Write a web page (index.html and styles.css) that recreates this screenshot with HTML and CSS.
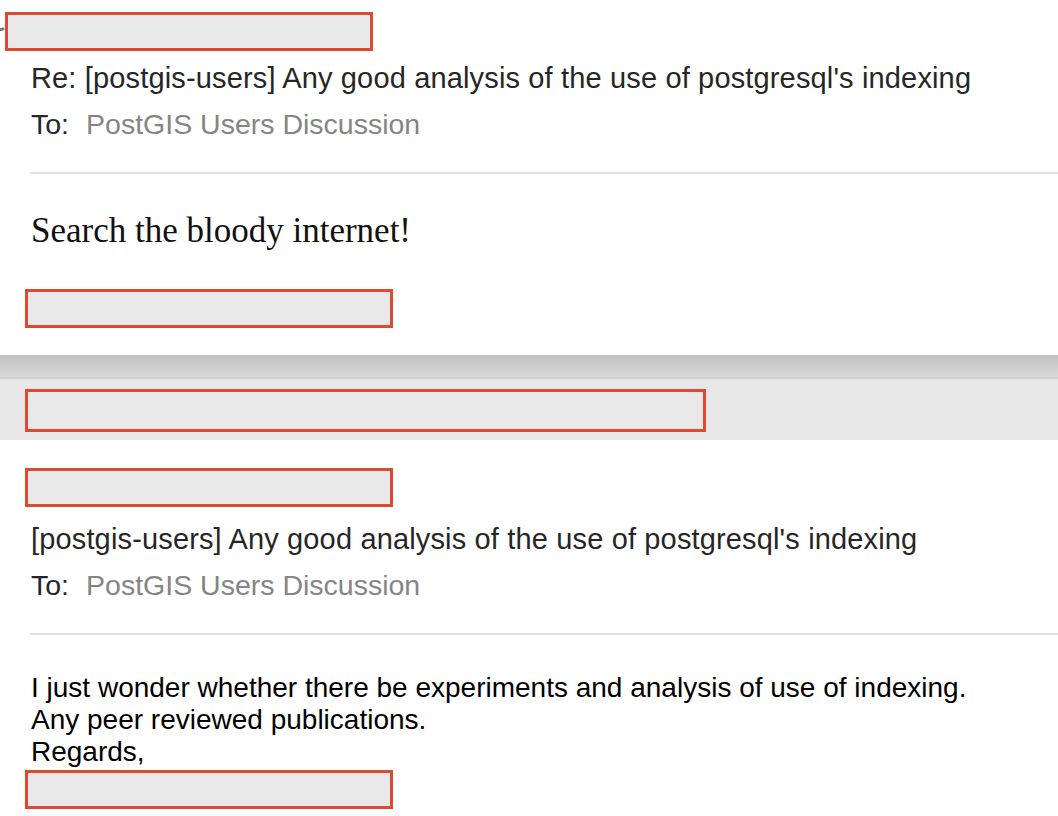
FILE: index.html
```html
<!DOCTYPE html>
<html>
<head>
<meta charset="utf-8">
<link rel="stylesheet" href="styles.css">
</head>
<body>
<section class="msg msg-top">
  <div class="from-row">
    <svg class="reply-icon" width="14" height="14" viewBox="0 0 14 14"><path d="M1 13 C2 7 6 4 12 3" fill="none" stroke="#7a7a7a" stroke-width="3" stroke-linecap="round"/></svg>
    <div class="redact r-name-top"></div>
  </div>
  <div class="subject">Re: [postgis-users] Any good analysis of the use of postgresql's indexing</div>
  <div class="to"><span class="to-label">To:</span><span class="to-name">PostGIS Users Discussion</span></div>
  <hr class="sep">
  <p class="reply-text">Search the bloody internet!</p>
  <div class="redact r-sig"></div>
</section>
<div class="shadow"></div>
<div class="band">
  <div class="redact r-wide"></div>
</div>
<section class="msg msg-bottom">
  <div class="redact r-name"></div>
  <div class="subject">[postgis-users] Any good analysis of the use of postgresql's indexing</div>
  <div class="to"><span class="to-label">To:</span><span class="to-name">PostGIS Users Discussion</span></div>
  <hr class="sep">
  <div class="body-text">
    <div>I just wonder whether there be experiments and analysis of use of indexing.</div>
    <div>Any peer reviewed publications.</div>
    <div>Regards,</div>
  </div>
  <div class="redact r-sig2"></div>
</section>
</body>
</html>
```
FILE: styles.css
```css
html, body {
  margin: 0;
  padding: 0;
  background: #ffffff;
  overflow: hidden;
}
body {
  font-family: "Liberation Sans", Arial, sans-serif;
  color: #222222;
  width: 1058px;
  height: 816px;
}
.redact {
  box-sizing: border-box;
  height: 39px;
  border: 3px solid #e0482f;
  background: #eae9e9;
}
.msg {
  background: #ffffff;
}
.msg-top {
  padding: 12px 0 27px;
}
.from-row {
  display: flex;
  align-items: flex-start;
}
.reply-icon {
  margin-left: -9px;
  margin-top: 14px;
  flex: none;
}
.r-name-top {
  width: 368px;
}
.subject {
  margin: 4px 0 0 31px;
  font-size: 29px;
  letter-spacing: 0.15px;
  line-height: 46px;
  color: #262626;
  white-space: nowrap;
}
.to {
  margin-left: 31px;
  font-size: 28.5px;
  line-height: 46px;
  white-space: nowrap;
}
.to-label {
  color: #262626;
  margin-right: 17px;
}
.to-name {
  color: #858585;
}
.sep {
  margin: 25px 0 0 30px;
  border: 0;
  height: 2px;
  background: #e3e3e3;
}
.reply-text {
  margin: 37px 0 0 31px;
  font-family: "Liberation Serif", "Times New Roman", serif;
  font-size: 35px;
  line-height: 40px;
  color: #111111;
}
.r-sig {
  width: 368px;
  margin: 38px 0 0 25px;
}
.shadow {
  height: 22px;
  background: linear-gradient(#c1c1c1, #d9d9d9);
  border-bottom: 2px solid #cfcfcf;
}
.band {
  background: #e8e8e8;
  padding: 10px 0 8px 25px;
}
.r-wide {
  width: 681px;
  height: 43px;
}
.msg-bottom {
  padding-top: 28px;
}
.r-name {
  width: 368px;
  margin-left: 25px;
}
.msg-bottom .subject {
  margin-top: 9px;
}
.body-text {
  margin: 37px 0 0 31px;
  font-size: 28px;
  line-height: 32px;
  color: #000000;
  white-space: nowrap;
}
.r-sig2 {
  width: 368px;
  margin: 2px 0 0 25px;
}
```
